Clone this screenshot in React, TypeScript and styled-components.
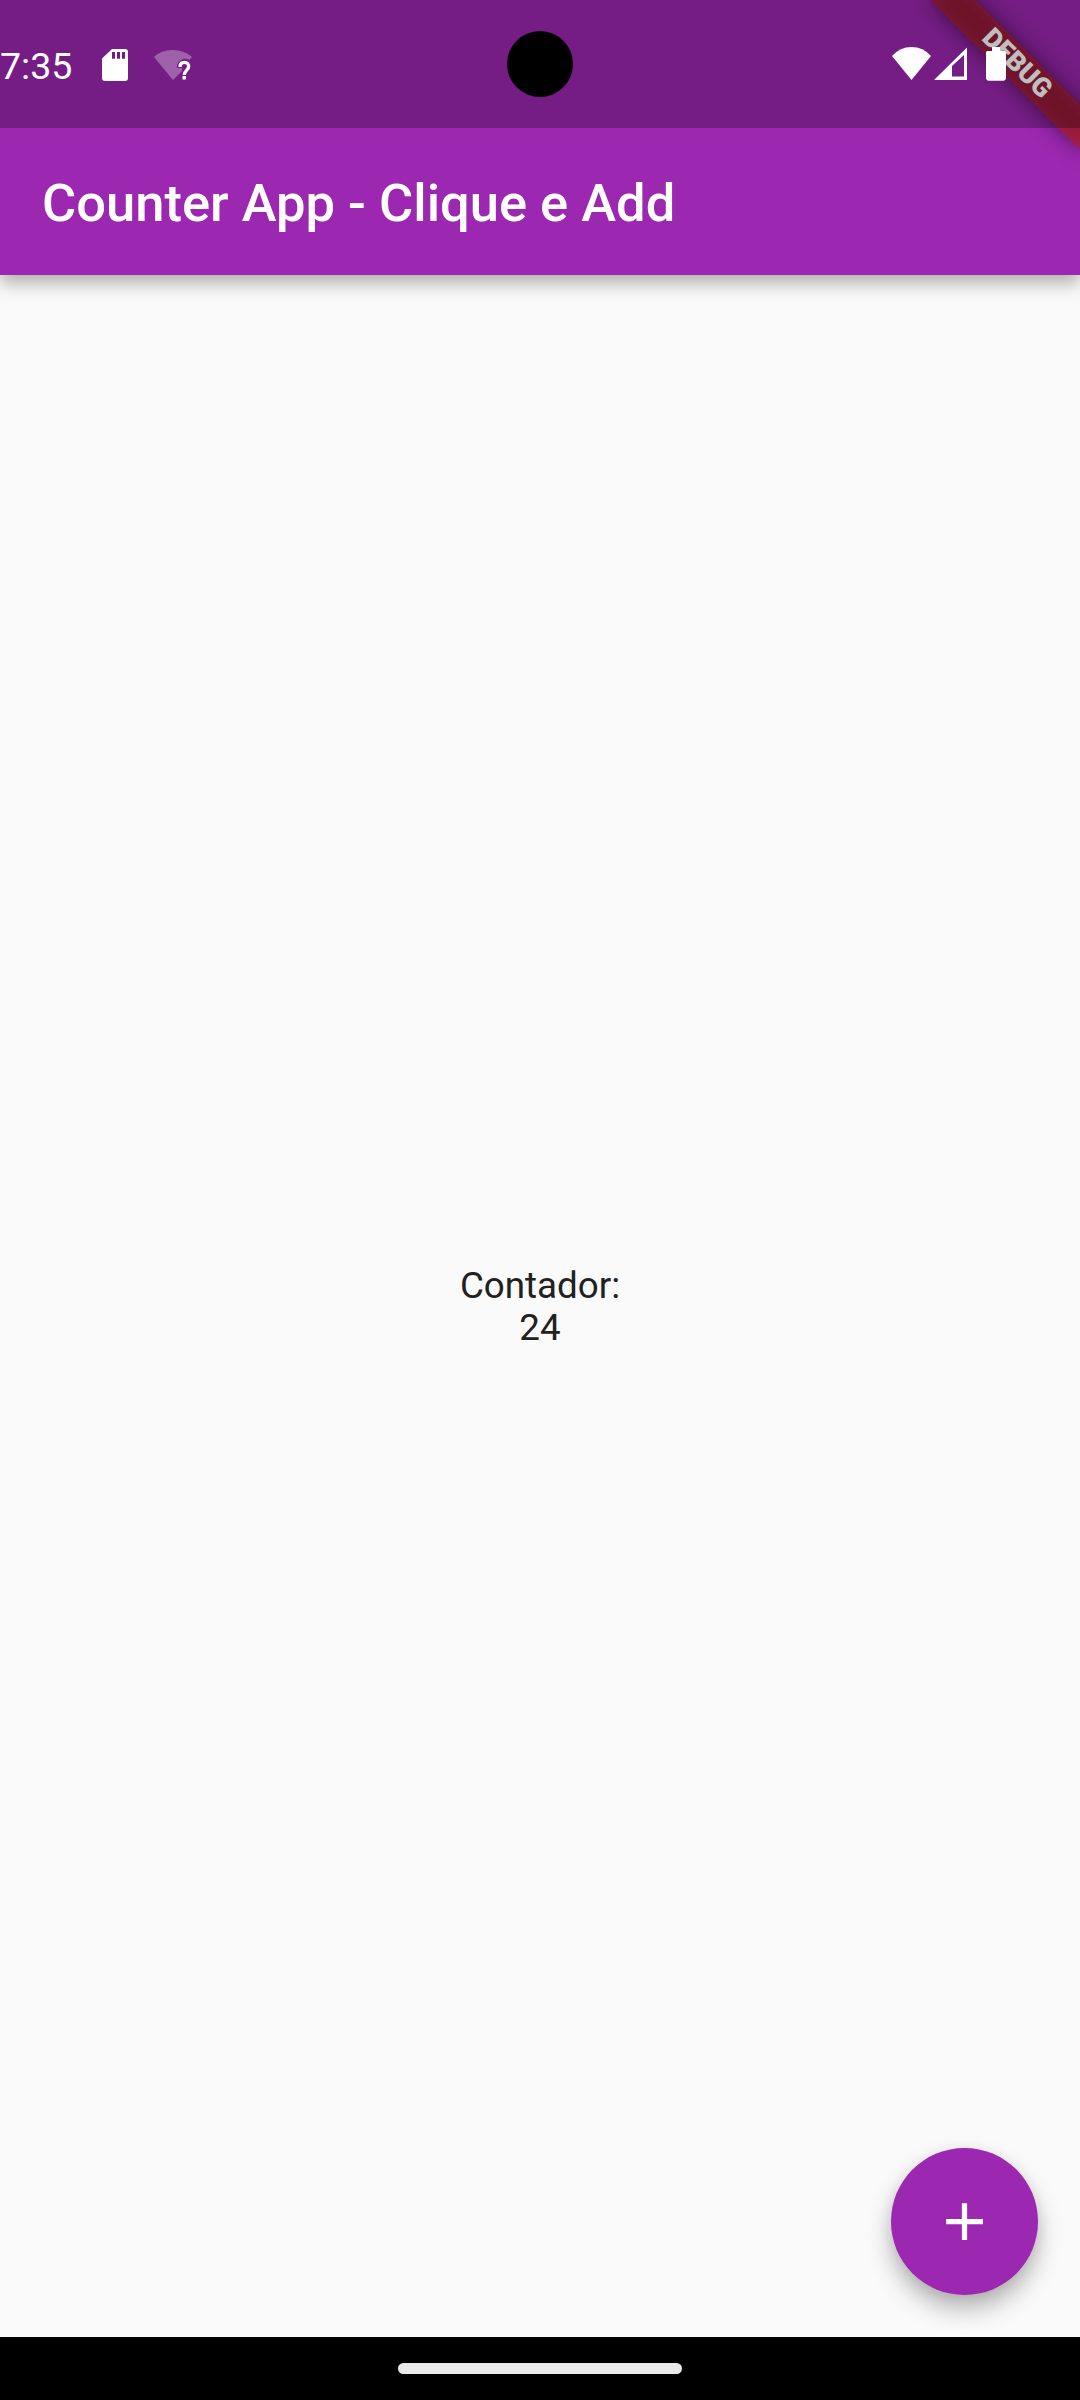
import React, { useState } from "react";
import styled, { createGlobalStyle } from "styled-components";

const purple = "#9c27b0";

const GlobalStyle = createGlobalStyle`
  *, *::before { box-sizing: border-box; }
  body {
    margin: 0;
    background: #fafafa;
    font-family: Roboto, "Noto Sans", sans-serif;
  }
`;

const Screen = styled.div`
  position: relative;
  display: flex;
  flex-direction: column;
  width: 1080px;
  height: 2400px;
  overflow: hidden;
  background: #fafafa;
`;

const AppBar = styled.header`
  display: flex;
  align-items: center;
  height: 275px;
  padding: 131px 42px 0;
  background: ${purple};
  box-shadow: 0 8px 17px rgba(0, 0, 0, 0.31);
`;

const Title = styled.h1`
  margin: 0;
  color: #fff;
  font-size: 52.5px;
  font-weight: 500;
  line-height: 62px;
  letter-spacing: 0;
  white-space: nowrap;
`;

const Content = styled.main`
  flex: 1;
  display: flex;
  flex-direction: column;
  align-items: center;
  justify-content: center;
  padding-top: 2px;
`;

const CounterText = styled.span`
  color: #212121;
  font-size: 36.75px;
  line-height: 42px;
  letter-spacing: 0;
`;

const AddButton = styled.button`
  position: absolute;
  right: 42px;
  bottom: 105px;
  display: flex;
  align-items: center;
  justify-content: center;
  width: 147px;
  height: 147px;
  padding: 0;
  border: 0;
  border-radius: 50%;
  background: ${purple};
  box-shadow: 0 14px 24px rgba(0, 0, 0, 0.28), 0 2px 14px rgba(0, 0, 0, 0.07);
`;

const NavBar = styled.footer`
  display: flex;
  justify-content: center;
  height: 63px;
  padding-top: 26px;
  background: #000;
`;

const Handle = styled.div`
  width: 284px;
  height: 11px;
  border-radius: 6px;
  background: #ebebeb;
`;

const Banner = styled.div`
  position: absolute;
  top: 73.5px;
  left: 975px;
  display: flex;
  align-items: center;
  justify-content: center;
  width: 210px;
  height: 31.5px;
  transform: rotate(45deg);
  transform-origin: 105px -73.5px;
  color: #fff;
  font-size: 26.8px;
  font-weight: 900;
  line-height: 27px;

  &::before,
  &::after {
    content: "";
    position: absolute;
    inset: 0;
  }

  &::before {
    z-index: -2;
    background: rgba(0, 0, 0, 0.5);
    filter: blur(10.4px);
  }

  &::after {
    z-index: -1;
    background: rgba(183, 28, 28, 0.627);
  }
`;

const StatusBar = styled.div`
  position: absolute;
  inset: 0 0 auto;
  display: flex;
  justify-content: space-between;
  height: 128px;
  background: rgba(0, 0, 0, 0.25);
`;

const StatusGroup = styled.div<{ $end?: boolean }>`
  display: flex;
  align-items: flex-start;
  width: 260px;
  padding-top: 44px;
  padding-left: ${(p) => (p.$end ? "70px" : "0")};
`;

const Clock = styled.span`
  width: 94px;
  color: #fff;
  font-size: 37.5px;
  line-height: 45px;
`;

const Glyph = styled.svg`
  display: block;
  flex: none;
`;

const Camera = styled.div`
  position: absolute;
  top: 31px;
  left: 507px;
  width: 66px;
  height: 66px;
  border-radius: 50%;
  background: #000;
`;

export default function App() {
  const [count, setCount] = useState(24);

  return (
    <>
      <GlobalStyle />
      <Screen>
        <AppBar>
          <Title>Counter App - Clique e Add</Title>
        </AppBar>
        <Content>
          <CounterText>Contador:</CounterText>
          <CounterText>{count}</CounterText>
        </Content>
        <NavBar>
          <Handle />
        </NavBar>
        <AddButton aria-label="+" onClick={() => setCount(count + 1)}>
          <Glyph width="63" height="63" viewBox="0 0 24 24" fill="#fff">
            <path d="M19 13h-6v6h-2v-6H5v-2h6V5h2v6h6v2z" />
          </Glyph>
        </AddButton>
        <Banner>DEBUG</Banner>
        <StatusBar>
          <StatusGroup>
            <Clock>7:35</Clock>
            <Glyph width="42" height="42" viewBox="0 0 42 42">
              <path
                fill="#fff"
                fillRule="evenodd"
                d="M18 5H31Q34 5 34 8V34Q34 37 31 37H11Q8 37 8 34V14.500ZM18 8V14.700H21V8ZM23 8V14.700H26V8ZM28 8V14.700H31V8Z"
              />
            </Glyph>
            <Glyph width="64" height="42" viewBox="0 0 64 42">
              <path
                fill="#fff"
                fillOpacity="0.3"
                d="M18 13Q25 6 36.500 6Q48 6 56 13L53.500 16Q48 13 44 17Q40 20 41 24H46V27L37 36Z"
              />
              <path
                fill="none"
                stroke="#fff"
                strokeWidth="3.300"
                d="M44 23C44 19 46 18.300 48.500 18.300C51 18.300 52.700 20 52.700 22.500C52.700 26 48.300 26.500 48.300 31"
              />
              <rect x="46.500" y="32" width="3.500" height="3.500" fill="#fff" />
            </Glyph>
          </StatusGroup>
          <StatusGroup $end>
            <Glyph width="42" height="42" viewBox="0 0 42 42">
              <path fill="#fff" d="M2 12Q10 3 21.500 3Q33 3 41 12L21.500 36Z" />
            </Glyph>
            <Glyph width="46" height="42" viewBox="0 0 46 42">
              <path
                fill="#fff"
                fillRule="evenodd"
                d="M2 36L35 3.500V36ZM20 22V32.500H32V11Z"
              />
            </Glyph>
            <Glyph width="40" height="42" viewBox="0 0 40 42">
              <path
                fill="#fff"
                d="M14 3H22V7H27L28 8V35L26 36.700H10L8 35V8L9 7H14Z"
              />
            </Glyph>
          </StatusGroup>
        </StatusBar>
        <Camera />
      </Screen>
    </>
  );
}
